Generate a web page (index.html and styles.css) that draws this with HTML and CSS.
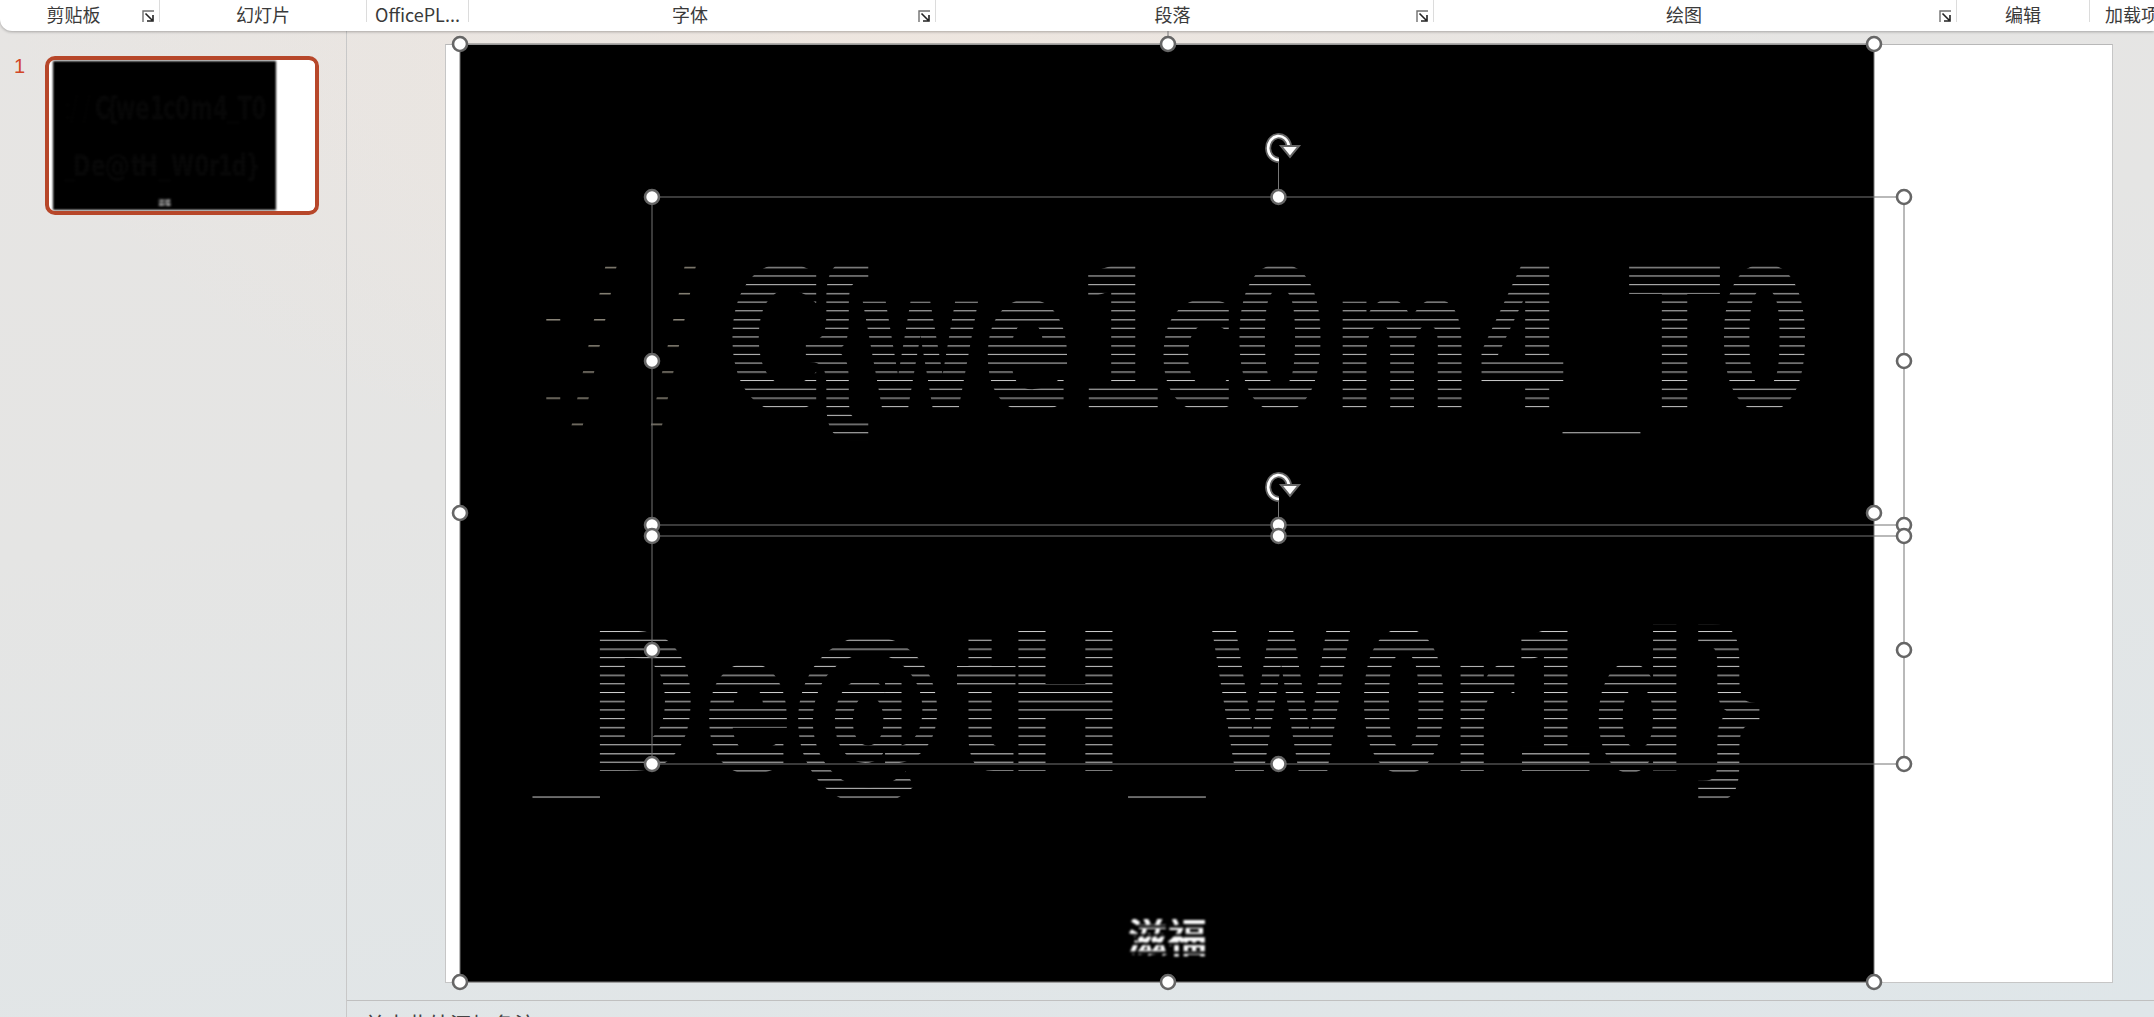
FILE: index.html
```html
<!DOCTYPE html>
<html lang="zh">
<head>
<meta charset="utf-8">
<title>PowerPoint</title>
<link rel="stylesheet" href="styles.css">
</head>
<body>
<div class="app">
  <svg class="defs" width="0" height="0" aria-hidden="true">
    <defs>
      <pattern id="scan1" patternUnits="userSpaceOnUse" x="0" y="266" width="100" height="26.16">
        <rect y="0" width="100" height="1.5" fill="#8a8a8a"/>
        <rect y="8.72" width="100" height="1" fill="#c8c8c8"/>
        <rect y="17.44" width="100" height="1" fill="#c8c8c8"/>
      </pattern>
      <pattern id="scan1b" patternUnits="userSpaceOnUse" x="0" y="266" width="100" height="26.16">
        <rect y="0" width="100" height="1.5" fill="#8a8578"/>
      </pattern>
      <pattern id="scan2" patternUnits="userSpaceOnUse" x="0" y="648.1" width="100" height="26.16">
        <rect y="0" width="100" height="1.5" fill="#949494"/>
        <rect y="8.72" width="100" height="1" fill="#cecece"/>
        <rect y="17.44" width="100" height="1" fill="#cecece"/>
      </pattern>
      <pattern id="scan3" patternUnits="userSpaceOnUse" x="0" y="919" width="100" height="8.7">
        <rect y="0" width="100" height="6.2" fill="#fff"/>
      </pattern>
      <symbol id="launcher" viewBox="0 0 12 12">
        <path d="M1 12V1H12" fill="none" stroke="#707070" stroke-width="1.4"/>
        <path d="M3.5 3.5L10 10M11 5V11H5" fill="none" stroke="#222" stroke-width="1.6"/>
      </symbol>
      <g id="pic">
        <g class="pic-text">
          <text class="glyphs thin-g" fill="url(#scan1b)" transform="scale(.69 1)" x="768 827 942" y="408">://</text>
          <text class="glyphs" fill="url(#scan1)" transform="scale(.69 1)" x="1051 1143 1243 1423 1555 1678 1787 1930 2139" y="408">C{we1c0m4</text>
          <text class="under" fill="url(#scan1)" transform="scale(1.5 1)" x="1043" y="411.7">_</text>
          <text class="glyphs" fill="url(#scan1)" transform="scale(.69 1)" x="2361 2490" y="408">T0</text>
          <text class="under" fill="url(#scan2)" transform="scale(1.3 1)" x="410" y="776.7">_</text>
          <text class="glyphs g2" fill="url(#scan2)" transform="scale(.69 1)" x="851 1019" y="771">De</text>
          <text class="glyphs g2" fill="url(#scan2)" transform="scale(.84 1)" x="937" y="771">@</text>
          <text class="glyphs g2" fill="url(#scan2)" transform="scale(.69 1)" x="1384" y="771">t</text>
          <text class="glyphs g2" fill="url(#scan2)" transform="scale(.75 1)" x="1340" y="771">H</text>
          <text class="under" fill="url(#scan2)" transform="scale(1.5 1)" x="753" y="776.7">_</text>
          <text class="glyphs g2" fill="url(#scan2)" transform="scale(.69 1)" x="1751 1968 2101 2184 2309 2438" y="771">W0r1d}</text>
        </g>
        <text class="stamp" fill="url(#scan3)" x="1128" y="952" textLength="79" lengthAdjust="spacingAndGlyphs">滋福</text>
      </g>
      <g id="rotate">
        <path class="rot-o" d="M1289 146A10.5 12 0 1 0 1279 160"/>
        <path class="rot-i" d="M1289 146A10.5 12 0 1 0 1279 160"/>
        <path class="rot-a" d="M1281 146H1299L1290 157Z"/>
      </g>
    </defs>
  </svg>

  <header class="ribbon">
    <div class="group g1"><span class="label">剪贴板</span><svg class="launch"><use href="#launcher"/></svg></div>
    <div class="group g2w"><span class="label">幻灯片</span></div>
    <div class="group g3"><span class="label">OfficePL...</span></div>
    <div class="group g4"><span class="label">字体</span><svg class="launch"><use href="#launcher"/></svg></div>
    <div class="group g5"><span class="label">段落</span><svg class="launch"><use href="#launcher"/></svg></div>
    <div class="group g6"><span class="label">绘图</span><svg class="launch"><use href="#launcher"/></svg></div>
    <div class="group g7"><span class="label">编辑</span></div>
    <div class="group g8"><span class="label">加载项</span></div>
  </header>

  <main class="main">
    <aside class="thumbs">
      <span class="num">1</span>
      <div class="thumb">
        <div class="thumb-page">
          <svg class="thumb-pic" viewBox="460 44 1414 938" preserveAspectRatio="none"><use href="#pic"/></svg>
        </div>
      </div>
    </aside>
    <section class="editor">
      <div class="stage">
        <div class="slide">
          <svg class="picture" viewBox="460 44 1414 938"><use href="#pic"/></svg>
        </div>
      </div>
      <div class="notes">单击此处添加备注</div>
    </section>
  </main>

  <svg class="overlay" viewBox="0 0 2154 1017" aria-hidden="true">
    <g class="thin">
      <path d="M1168 31V44"/>
      <path d="M1278.5 160V197M1278.5 498V536"/>
    </g>
    <g class="sel">
      <rect x="460" y="44" width="1414" height="938" class="pic-frame"/>
      <rect x="652" y="197" width="1252" height="328"/>
      <rect x="652" y="536" width="1252" height="228"/>
    </g>
    <use href="#rotate"/>
    <use href="#rotate" y="339"/>
    <g class="handles">
      <circle cx="460" cy="44" r="7"/><circle cx="1168" cy="44" r="7"/><circle cx="1874" cy="44" r="7"/>
      <circle cx="460" cy="513" r="7"/><circle cx="1874" cy="513" r="7"/>
      <circle cx="460" cy="982" r="7"/><circle cx="1168" cy="982" r="7"/><circle cx="1874" cy="982" r="7"/>
      <circle cx="652" cy="197" r="7"/><circle cx="1278.5" cy="197" r="7"/><circle cx="1904" cy="197" r="7"/>
      <circle cx="652" cy="361" r="7"/><circle cx="1904" cy="361" r="7"/>
      <circle cx="652" cy="525" r="7"/><circle cx="1278.5" cy="525" r="7"/><circle cx="1904" cy="525" r="7"/>
      <circle cx="652" cy="536" r="7"/><circle cx="1278.5" cy="536" r="7"/><circle cx="1904" cy="536" r="7"/>
      <circle cx="652" cy="650" r="7"/><circle cx="1904" cy="650" r="7"/>
      <circle cx="652" cy="764" r="7"/><circle cx="1278.5" cy="764" r="7"/><circle cx="1904" cy="764" r="7"/>
    </g>
  </svg>
</div>
</body>
</html>
```

FILE: styles.css
```css
* { box-sizing: border-box; }
html, body { margin: 0; height: 100%; overflow: hidden; }
body {
  font-family: "Noto Sans CJK SC", "Noto Sans", sans-serif;
  color: #333;
}
.app {
  position: relative;
  width: 2154px;
  height: 1017px;
  display: flex;
  flex-direction: column;
  overflow: hidden;
  background:
    radial-gradient(ellipse 900px 500px at 900px 0, rgba(240, 230, 222, .8), rgba(240, 230, 222, 0)),
    linear-gradient(170deg, #e7e5e3 0, #e5e5e4 40%, #dfe6e9 100%);
}
.defs { position: absolute; }

.ribbon {
  flex: none;
  height: 31px;
  display: flex;
  background: #fff;
  border-radius: 0 0 0 12px;
  box-shadow: 0 1px 3px rgba(0, 0, 0, .28);
  position: relative;
  z-index: 1;
}
.group {
  position: relative;
  height: 22px;
  display: flex;
  align-items: flex-start;
  justify-content: center;
  border-right: 1px solid #dcdcdc;
  flex: none;
}
.g1 { width: 160px; padding-right: 12px; }
.g2w { width: 207px; }
.g3 { width: 102px; }
.g4 { width: 467px; padding-right: 24px; }
.g5 { width: 498px; padding-right: 24px; }
.g6 { width: 523px; padding-right: 22px; }
.g7 { width: 133px; }
.g8 { flex: 1; height: 31px; border-right: 0; justify-content: flex-start; padding-left: 15px; white-space: nowrap; overflow: hidden; }
.label { font-size: 18px; line-height: 28px; height: 31px; color: #3a3a3a; flex: none; }
.launch { position: absolute; right: 5px; top: 10px; width: 12px; height: 12px; }

.main { flex: 1; display: flex; min-height: 0; }
.thumbs {
  flex: none;
  width: 347px;
  border-right: 1px solid #c8c8c8;
  display: flex;
  align-items: flex-start;
  padding: 25px 0 0 14px;
  gap: 23px;
}
.num { font: 20px/20px "Liberation Sans", sans-serif; color: #d24726; width: 8px; }
.thumb {
  width: 274px;
  height: 159px;
  border: 4px solid #b7472a;
  border-radius: 10px;
  padding: 1px 0 1px 4px;
  background: #fff;
  overflow: hidden;
}
.thumb-page { width: 100%; height: 100%; background: #fff; }
.thumb-pic {
  display: block;
  width: 223px;
  height: 149px;
  background: #000;
  filter: blur(1.1px);
  --pic-text: .32;
}

.editor { flex: 1; display: flex; flex-direction: column; min-width: 0; }
.stage { flex: 1; padding: 13px 0 0 98px; min-height: 0; }
.slide {
  width: 1668px;
  height: 939px;
  background: #fff;
  border: 1px solid #c6c6c6;
  border-top-color: #b8b8b8;
  padding-left: 14px;
}
.picture { display: block; width: 1414px; height: 937px; background: #000; }

.pic-text { opacity: var(--pic-text, 1); }
.glyphs {
  font-family: "DejaVu Sans", sans-serif;
  font-weight: 700;
  font-size: 196px;
}
.g2 { font-size: 192px; }
.thin-g { font-weight: 400; }
.under {
  font-family: "DejaVu Sans", sans-serif;
  font-size: 100px;
}
.stamp {
  font-family: "Noto Sans CJK SC", sans-serif;
  font-weight: 700;
  font-size: 40px;
  filter: blur(1.1px);
}

.notes {
  flex: none;
  height: 17px;
  border-top: 1px solid #c0c0c0;
  font-size: 21.5px;
  line-height: 46px;
  padding-left: 17px;
  overflow: hidden;
  color: #444;
}

.overlay {
  position: absolute;
  left: 0;
  top: 0;
  width: 2154px;
  height: 1017px;
  pointer-events: none;
  z-index: 2;
}
.thin path { stroke: #777; stroke-width: 1; fill: none; }
.sel rect { fill: none; stroke: #747474; stroke-width: 1; }
.sel .pic-frame { stroke: #777; }
.handles circle { fill: #fff; stroke: #666; stroke-width: 2.6; }
.rot-o { fill: none; stroke: #666; stroke-width: 6; }
.rot-i { fill: none; stroke: #fff; stroke-width: 2.6; }
.rot-a { fill: #fff; stroke: #666; stroke-width: 2; }
```
